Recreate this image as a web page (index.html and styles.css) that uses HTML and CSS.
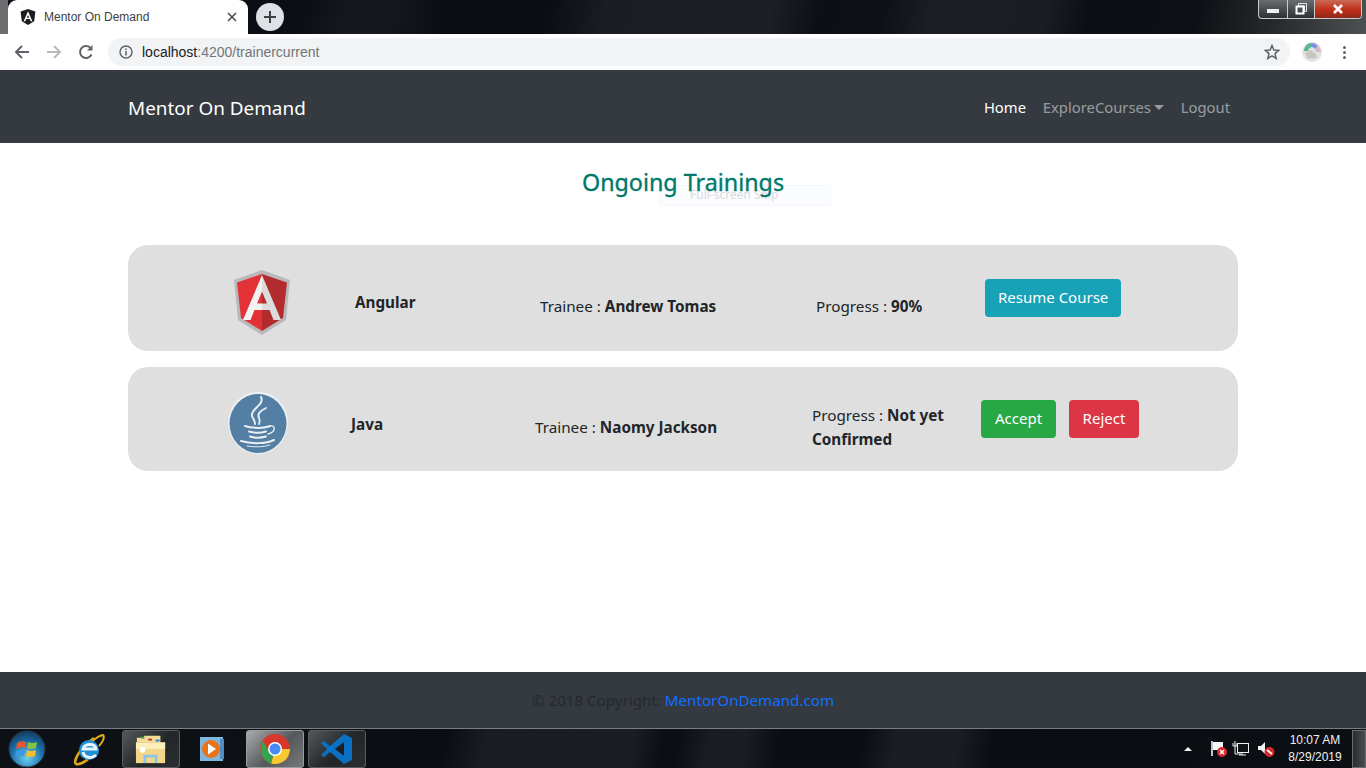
FILE: index.html
```html
<!DOCTYPE html>
<html lang="en">
<head>
<meta charset="utf-8">
<title>Mentor On Demand</title>
<link rel="stylesheet" href="styles.css">
</head>
<body>
<div class="screen">
  <header class="tabstrip">
    <div class="tab">
      <svg class="tab-icon" viewBox="0 0 16 16"><path d="M8 0 15.400 2.600 14.200 12.200 8 16 1.800 12.200 .6 2.600Z" fill="#1b1d20"/><path d="M8 2.300 3.600 12.200H5.300L6.200 10H9.800L10.700 12.200H12.400ZM8 6 9.200 8.700H6.800Z" fill="#fff" fill-rule="evenodd"/></svg>
      <span class="tab-title">Mentor On Demand</span>
      <svg class="tab-close" viewBox="0 0 10 10"><path d="M1 1 9 9M9 1 1 9" stroke="#4a4d51" stroke-width="1.600"/></svg>
    </div>
    <div class="newtab"><svg viewBox="0 0 12 12"><path d="M6 0V12M0 6H12" stroke="#3c4043" stroke-width="2"/></svg></div>
    <div class="winctl">
      <div class="winbtn win-min"><span class="win-dash"></span></div>
      <div class="winbtn win-max"><svg viewBox="0 0 12 12"><path d="M3.500 .5H11.500V8.500H9.500V3H3.500Z" fill="none" stroke="#e8e8e8"/><rect x="1.500" y="3.500" width="7" height="7" fill="none" stroke="#fff" stroke-width="2"/></svg></div>
      <div class="winbtn win-close"><svg viewBox="0 0 12 10"><path d="M2 1 10 9M10 1 2 9" stroke="#fff" stroke-width="2.600"/></svg></div>
    </div>
  </header>
  <div class="toolbar">
    <svg class="tool" viewBox="0 0 16 16"><path d="M15 8H2M8 2 2 8l6 6" fill="none" stroke="#5f6368" stroke-width="2"/></svg>
    <svg class="tool" viewBox="0 0 16 16"><path d="M1 8H14M8 2l6 6-6 6" fill="none" stroke="#b8babd" stroke-width="2"/></svg>
    <svg class="tool" viewBox="0 0 16 16"><path d="M13.500 10.500A6 6 0 1 1 12.200 3.700" fill="none" stroke="#5f6368" stroke-width="2"/><path d="M14.500 1V6.500H9Z" fill="#5f6368"/></svg>
    <div class="omnibox">
      <svg class="info" viewBox="0 0 14 14"><circle cx="7" cy="7" r="6" fill="none" stroke="#5f6368" stroke-width="1.400"/><path d="M7 6V10.500M7 3.500V5" stroke="#5f6368" stroke-width="1.500"/></svg>
      <span class="url"><span class="url-host">localhost</span>:4200/trainercurrent</span>
      <svg class="star" viewBox="0 0 16 16"><path d="M8 1.500 9.900 6 14.700 6.400 11 9.600 12.200 14.400 8 11.800 3.800 14.400 5 9.600 1.300 6.400 6.100 6Z" fill="none" stroke="#5f6368" stroke-width="1.500"/></svg>
    </div>
    <svg class="avatar" viewBox="0 0 20 20"><circle cx="10" cy="10" r="10" fill="#e1e2e2"/><path d="M2 9A8 8 0 0 1 10 1L10 5A5 5 0 0 0 6 9Z" fill="#58b597"/><path d="M10 1A8 8 0 0 1 16 4L13 7A5 5 0 0 0 10 5Z" fill="#7c8fdc"/><path d="M16 4A8 8 0 0 1 19 10L14 10 13 7Z" fill="#d9b7c7"/><path d="M3 11 9 8 14 12 15 16 6 17Z" fill="#c9c7bd"/></svg>
    <div class="kebab"><i></i><i></i><i></i></div>
  </div>
  <nav class="navbar">
    <a class="brand">Mentor On Demand</a>
    <ul class="navlinks">
      <li class="navlink active">Home</li>
      <li class="navlink">ExploreCourses<span class="caret"></span></li>
      <li class="navlink">Logout</li>
    </ul>
  </nav>
  <main class="content">
    <h2 class="heading">Ongoing Trainings</h2>
    <section class="card card-first">
      <div class="logo-col">
        <svg class="logo-ng" viewBox="0 0 58 66">
          <path d="M29 0 57 10 53 50 29 65 5 50 1 10Z" fill="#b9b9b9"/>
          <path d="M29 4 54 12.500 50 48 29 61Z" fill="#b22c2d"/>
          <path d="M29 4 4 12.500 8 48 29 61Z" fill="#e23237"/>
          <path d="M29 5 10 50H17.500L21.500 40H29V33.500H24L29 21.500Z" fill="#f2f2f2"/>
          <path d="M29 5 48 50H40.500L36.500 40H29V33.500H34L29 21.500Z" fill="#dcdcdc"/>
        </svg>
      </div>
      <div class="name-col">Angular</div>
      <div class="trainee-col">Trainee : <b>Andrew Tomas</b></div>
      <div class="progress-col">Progress : <b>90%</b></div>
      <div class="action-col"><button class="btn btn-info">Resume Course</button></div>
    </section>
    <section class="card card-second">
      <div class="logo-col">
        <svg class="logo-java" viewBox="0 0 60 62">
          <ellipse cx="30" cy="31" rx="30" ry="31" fill="#eef0f1"/>
          <ellipse cx="30" cy="31.500" rx="28.500" ry="29.500" fill="#527fa3"/>
          <g fill="none" stroke="#e9eff3" stroke-linecap="round">
            <path d="M33 5C37 13 22 17 24 24C25 27 27 28 27 32" stroke-width="2"/>
            <path d="M38 16C32 19 29 22 31 26C32 28 32 30 31 32" stroke-width="1.800"/>
            <path d="M17 34C24 36.500 36 36.500 42 34" stroke-width="2"/>
            <path d="M42 34C48 33 48 40 40 42" stroke-width="1.300"/>
            <path d="M21 39.500C26 41 33 41 38 39.500" stroke-width="2"/>
            <path d="M22 44.500C27 46 33 46 38 44.500" stroke-width="2"/>
            <path d="M13 49C24 52 38 52 46 48" stroke-width="2"/>
            <path d="M19 54C28 55.500 36 55 42 53" stroke-width="1"/>
          </g>
        </svg>
      </div>
      <div class="name-col">Java</div>
      <div class="trainee-col">Trainee : <b>Naomy Jackson</b></div>
      <div class="progress-col">Progress : <b>Not yet Confirmed</b></div>
      <div class="action-col"><button class="btn btn-success">Accept</button><button class="btn btn-danger">Reject</button></div>
    </section>
    <div class="snip">Full-screen Snip</div>
  </main>
  <footer class="footer">© 2018 Copyright: <a class="footer-link">MentorOnDemand.com</a></footer>
  <div class="taskbar">
    <svg class="start" viewBox="0 0 38 38">
      <defs><radialGradient id="orb" cx=".5" cy=".75" r=".75"><stop offset="0" stop-color="#6fd0f2"/><stop offset=".6" stop-color="#1a6ca8"/><stop offset="1" stop-color="#123a5c"/></radialGradient></defs>
      <circle cx="19" cy="19" r="18" fill="url(#orb)" stroke="#27384a"/>
      <path d="M9 13Q13 10 18 12L17 18Q12 16 8 19Z" fill="#e8562c"/><path d="M20 12Q24 14 29 12L28 18Q23 20 19 18Z" fill="#86c440"/>
      <path d="M8 21Q12 18 17 20L16 26Q11 24 7 27Z" fill="#3b9be0"/><path d="M19 20Q23 22 28 20L27 26Q22 28 18 26Z" fill="#f3c02c"/>
    </svg>
    <svg class="ie" viewBox="0 0 34 34">
      <path d="M10 25C15 12 25 4 31 3C33 5 31 10 27 14" fill="none" stroke="#e2ad1c" stroke-width="2"/>
      <path d="M22 6C7 16 1 30 4 32C7 33 13 30 16 27" fill="none" stroke="#dca51c" stroke-width="2.500"/>
      <circle cx="17" cy="18" r="10" fill="#1f8fd8"/><path d="M11 17H24C24 11 12 11 11 17ZM11 20C12 26 20 27 24 23" fill="none" stroke="#e8f6fd" stroke-width="3"/>
    </svg>
    <div class="taskbtn">
      <svg class="taskicon" viewBox="0 0 34 34"><path d="M2 5H9L10 3H27V10H2Z" fill="#f3dc94"/><rect x="6" y="4" width="4" height="2" fill="#4aa64f"/><rect x="14" y="6" width="4" height="2" fill="#c33"/><rect x="22" y="7" width="4" height="2" fill="#2a7fd0"/><path d="M1 10H32V32H1Z" fill="#f2d68a"/><path d="M1 10H32V17H1Z" fill="#fbeebb"/><path d="M9 32V23H24V32H21V26H12V32Z" fill="#8bc5e8"/><circle cx="8" cy="18" r="3" fill="#fff"/></svg>
    </div>
    <svg class="media" viewBox="0 0 26 26"><rect x="1" y="1" width="23" height="24" fill="#7fb6de"/><rect x="21" y="3" width="4" height="20" fill="#4f8cc0"/><circle cx="12" cy="13" r="9" fill="#e8731b"/><path d="M9 7.500 17 13 9 18.500Z" fill="#fff"/></svg>
    <div class="taskbtn taskbtn-active">
      <svg class="taskicon chrome" viewBox="0 0 32 32"><circle cx="16" cy="16" r="15" fill="#d8382c"/><path d="M16 16H31A15 15 0 0 1 12 30.500L16 16Z" fill="#f8c92e"/><path d="M16 16 12 30.500A15 15 0 0 1 4 8 L10 19Z" fill="#34a453"/><circle cx="16" cy="16" r="7" fill="#fff"/><circle cx="16" cy="16" r="5.500" fill="#4a8af4"/></svg>
    </div>
    <div class="taskbtn">
      <svg class="taskicon" viewBox="0 0 32 32"><path d="M23 1 31 5V27L23 31 9 19 3 24 0 22 6 16 0 10 3 8 9 13Z" fill="#0a70c4"/><path d="M23 9V23L14 16Z" fill="#1e1f22"/></svg>
    </div>
    <div class="tray">
      <span class="tray-up"></span>
      <svg class="tray-icon tray-flag" viewBox="0 0 18 18"><path d="M2 1V16" stroke="#fff" stroke-width="1.500"/><path d="M3 2H13V10H3Z" fill="#f5f5f5"/><circle cx="12" cy="12" r="5" fill="#d8282c"/><path d="M10 10 14 14M14 10 10 14" stroke="#fff" stroke-width="1.500"/></svg>
      <svg class="tray-icon" viewBox="0 0 18 18"><rect x="5.500" y="3.500" width="11" height="9" fill="#101316" stroke="#f0f0f0"/><path d="M3 1V8M1 3V6H5V3M3 8V14H11M7 15H14" stroke="#f0f0f0" fill="none"/></svg>
      <svg class="tray-icon" viewBox="0 0 18 18"><path d="M1 6H4L8 2V14L4 10H1Z" fill="#f0f0f0"/><circle cx="12.500" cy="12" r="5" fill="#d8282c"/><path d="M10 10 15 14" stroke="#fff" stroke-width="1.800"/></svg>
      <div class="clock"><span>10:07 AM</span><span>8/29/2019</span></div>
      <div class="showdesk"></div>
    </div>
  </div>
</div>
</body>
</html>
```

FILE: styles.css
```css
* { box-sizing: border-box; }
html, body { margin: 0; height: 100%; }
body { font-family: "Noto Sans", "Open Sans", sans-serif; color: #212529; font-size: 16px; overflow: hidden; }
.screen { position: relative; width: 1366px; height: 768px; display: flex; flex-direction: column; background: #fff; }

/* browser chrome */
.tabstrip { height: 34px; display: flex; align-items: flex-end; padding-left: 8px; flex: none;
  background:
    linear-gradient(90deg, #6b6d6f 0, #6b6d6f 8px, transparent 8px),
    linear-gradient(165deg, transparent 1270px, #5e6163 1345px),
    linear-gradient(100deg, #0b0f14 300px, #15191d 345px, #14181c 390px, #0a0e13 440px, #0a0e13 540px, #1a1e22 600px, #1c2024 760px, #0c1015 810px, #0d1116 870px, #1b1f23 920px, #1a1e22 1030px, #0b0f13 1075px, #0d1115 1180px, #262a2d 1260px, #55585a 1366px); }
.tab { width: 240px; height: 34px; background: #fff; border-radius: 9px 9px 0 0; display: flex; align-items: center; padding: 0 10px 0 12px; font-family: "Liberation Sans", sans-serif; font-size: 12px; }
.tab-icon { width: 16px; height: 16px; flex: none; }
.tab-title { margin-left: 8px; color: #3c4043; flex: 1; }
.tab-close { width: 10px; height: 10px; flex: none; margin-right: 1px; }
.newtab { width: 28px; height: 28px; border-radius: 50%; background: #dee1e6; margin: 0 0 3px 8px; display: flex; align-items: center; justify-content: center; }
.newtab svg { width: 12px; height: 12px; }
.winctl { margin-left: auto; margin-right: 4px; align-self: flex-start; display: flex; height: 19px; border: 1px solid #c8cacc; border-top: 0; border-radius: 0 0 4px 4px; overflow: hidden; background: linear-gradient(#6a6d70, #2e3134); }
.winbtn { height: 18px; display: flex; align-items: center; justify-content: center; border-right: 1px solid #c8cacc; }
.win-min { width: 29px; } .win-max { width: 27px; }
.win-close { width: 46px; border-right: 0; background: linear-gradient(#c86a58, #c02e16 55%, #8e2a1c); }
.win-dash { display: block; width: 12px; height: 4px; background: #f0f0f0; margin-top: 4px; }
.win-max svg { width: 12px; height: 12px; } .win-close svg { width: 12px; height: 10px; }

.toolbar { height: 36px; background: #fff; display: flex; align-items: center; flex: none; padding-left: 14px; }
.tool { width: 16px; height: 16px; margin-right: 16px; flex: none; }
.omnibox { width: 1182px; height: 28px; margin-left: -2px; border-radius: 14px; background: #f1f3f4; display: flex; align-items: center; padding: 0 10px 0 11px; }
.info { width: 14px; height: 14px; flex: none; }
.url { margin-left: 9px; flex: 1; font-family: "Liberation Sans", sans-serif; font-size: 14px; color: #70757a; }
.url-host { color: #202124; }
.star { width: 16px; height: 16px; flex: none; }
.avatar { width: 20px; height: 20px; margin-left: 12px; flex: none; }
.kebab { margin-left: 21px; display: flex; flex-direction: column; gap: 2px; }
.kebab i { display: block; width: 3px; height: 3px; border-radius: 50%; background: #5f6368; }

/* page */
.navbar { height: 73px; background: #343a40; flex: none; display: flex; align-items: center; justify-content: space-between; padding: 2px 128px 0; }
.brand { font-size: 18.900px; color: #fff; }
.navlinks { list-style: none; margin: 0; padding: 0 0 1px; display: flex; }
.navlink { font-size: 14.800px; color: rgba(255,255,255,.5); padding: 0 8.400px; }
.navlink:last-child { padding-right: 8px; }
.navlink.active { color: #fff; }
.caret { display: inline-block; margin-left: 3px; vertical-align: 3px; border-top: 5px solid; border-left: 5px solid transparent; border-right: 5px solid transparent; }

.content { flex: 1; position: relative; padding: 0 128px; }
.heading { position: relative; z-index: 1; margin: 21px 0 45px; text-align: center; font-size: 23.300px; line-height: 36px; font-weight: 400; color: #00796b; -webkit-text-stroke: .35px #00796b; }
.card { width: 1110px; background: #dfdfdf; border-radius: 20px; display: flex; align-items: flex-start; font-size: 15.250px; line-height: 24px; }
.card-first { height: 106px; padding-left: 105px; margin-bottom: 16px; }
.card-second { height: 104px; padding-left: 100px; }
.logo-col { flex: none; }
.card-first .logo-col { width: 122px; padding-top: 25px; }
.card-second .logo-col { width: 123px; padding-top: 25px; }
.logo-ng { display: block; width: 58px; height: 66px; }
.logo-java { display: block; width: 60px; height: 62px; }
.name-col { flex: none; width: 185px; font-weight: 700; }
.card-first .name-col { padding-top: 45px; }
.card-second .name-col { padding-top: 45px; width: 184px; }
.trainee-col { flex: none; width: 276px; }
.card-first .trainee-col { padding-top: 49px; }
.card-second .trainee-col { padding-top: 48px; width: 277px; }
.progress-col { flex: none; width: 169px; padding-right: 20px; }
.card-first .progress-col { padding-top: 49px; }
.card-second .progress-col { padding-top: 36px; }
.action-col { display: flex; gap: 13px; }
.card-first .action-col { padding-top: 34px; }
.card-second .action-col { padding-top: 33px; }
.btn { font: inherit; font-size: 15px; color: #fff; height: 38px; padding: 0 13.500px 2px; border: 0; border-radius: 4px; }
.btn-info { background: #17a2b8; padding: 0 13px 2px; }
.btn-success { background: #28a745; padding: 0 14px 2px; }
.btn-danger { background: #dc3545; }
.snip { position: absolute; left: 659px; top: 42px; width: 172px; height: 21px; padding-left: 30px; border: 1px solid #f3f6fb; border-radius: 3px; background: rgba(248,250,254,.6); font-size: 12px; line-height: 18px; color: #d9dbe0; }

.footer { height: 56px; flex: none; background: #343a40; color: #24282c; display: flex; align-items: center; justify-content: center; font-size: 15.150px; white-space: pre; }
.footer-link { color: #0f6fff; }

/* taskbar */
.taskbar { height: 40px; flex: none; display: flex; align-items: center; border-top: 1px solid #7b7e80; padding-left: 8px; color: #fff;
  background: linear-gradient(100deg, #0d1115 0, #0d1115 200px, #0a0e13 440px, #191d21 480px, #1a1e22 625px, #0b0f13 655px, #0b0f13 670px, #191d21 700px, #1a1e22 735px, #0a0e13 770px, #0a0e13 850px, #1a1d22 885px, #1a1d22 945px, #0a0d12 980px, #0b0e12 1366px); }
.start { width: 38px; height: 38px; flex: none; }
.ie { width: 34px; height: 34px; margin-left: 26px; flex: none; }
.taskbtn { width: 58px; height: 38px; border: 1px solid #5a5d60; border-radius: 3px; background: linear-gradient(135deg, #55585b, #232629 55%, #2c2f32); display: flex; align-items: center; justify-content: center; flex: none; }
.taskbar > .ie + .taskbtn { margin-left: 16px; }
.taskicon { width: 32px; height: 32px; }
.media { width: 26px; height: 26px; margin: 0 21px 0 19px; flex: none; }
.taskbtn-active { background: linear-gradient(135deg, #a9abad, #55585b 55%, #77797b); margin-right: 4px; border-color: #9a9c9e; }
.tray { margin-left: auto; display: flex; align-items: center; height: 100%; }
.tray-up { width: 0; height: 0; border-left: 4px solid transparent; border-right: 4px solid transparent; border-bottom: 4px solid #f0f0f0; margin-right: 18px; }
.tray-icon { width: 18px; height: 18px; margin-right: 7px; }
.tray-flag { margin-right: 4px; }
.clock { width: 76px; margin-left: -6px; padding-left: 2px; display: flex; flex-direction: column; align-items: center; font-family: "Liberation Sans", sans-serif; font-size: 12px; line-height: 17px; color: #f2f2f2; }
.showdesk { width: 14px; height: 38px; border: 1px solid #6a6d70; background: linear-gradient(90deg, #2a2d30, #4a4d50); }
```
